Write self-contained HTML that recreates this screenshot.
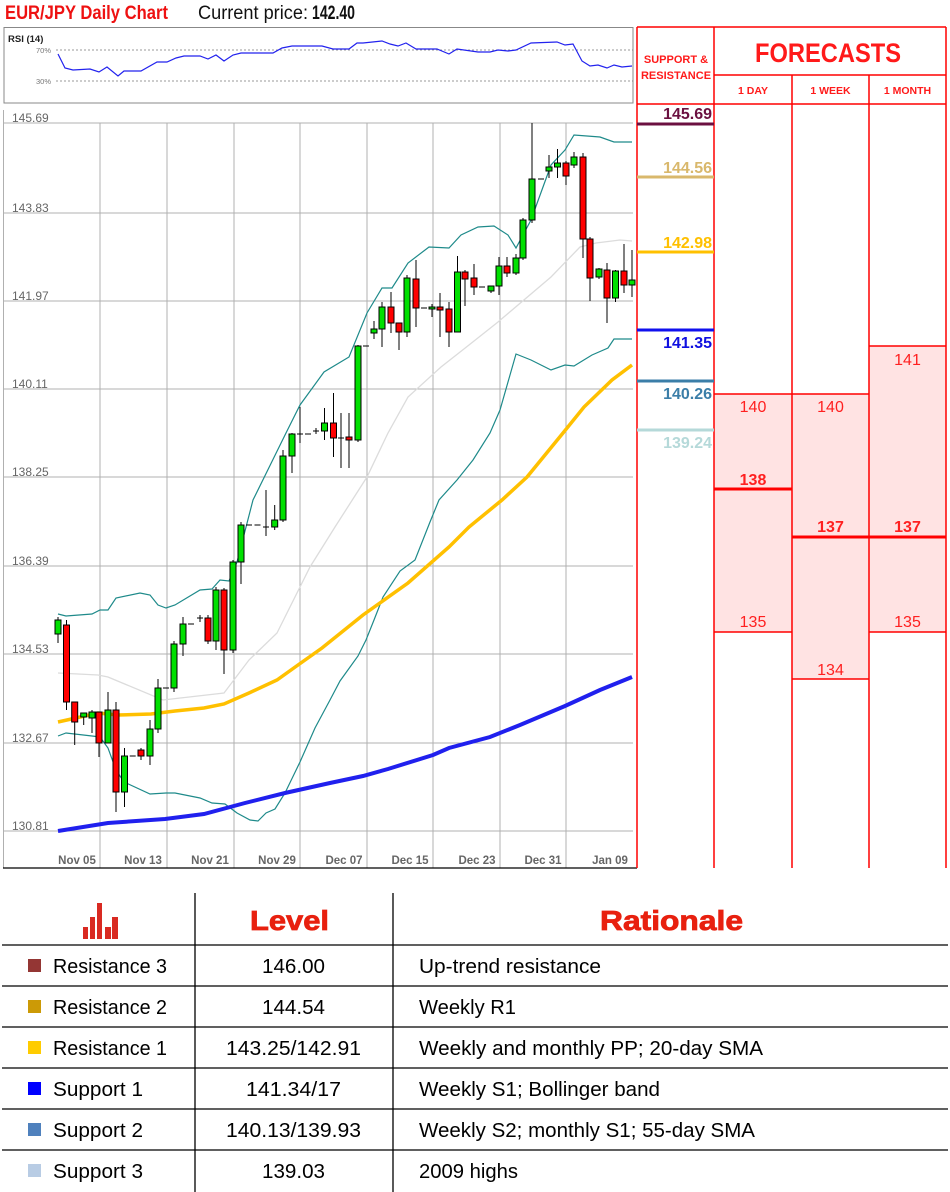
<!DOCTYPE html>
<html><head><meta charset="utf-8"><style>
html,body{margin:0;padding:0;background:#fff;}
svg{display:block;font-family:"Liberation Sans",sans-serif;}
</style></head><body>
<svg width="950" height="1192" viewBox="0 0 950 1192" xmlns="http://www.w3.org/2000/svg">
<rect width="950" height="1192" fill="#fff"/>
<!-- title -->
<text x="5" y="19" font-size="19" font-weight="bold" fill="#ee1111" textLength="163" lengthAdjust="spacingAndGlyphs">EUR/JPY Daily Chart</text>
<text x="198" y="19" font-size="19" fill="#111" textLength="110" lengthAdjust="spacingAndGlyphs">Current price:</text>
<text x="312" y="19" font-size="19" font-weight="bold" fill="#111" textLength="43" lengthAdjust="spacingAndGlyphs">142.40</text>

<!-- RSI -->
<rect x="4" y="27.5" width="629" height="75.5" fill="#fff" stroke="#888" stroke-width="1"/>
<text x="8" y="42" font-size="9.5" fill="#222" font-weight="bold">RSI (14)</text>
<text x="36" y="53" font-size="7.5" fill="#777">70%</text>
<text x="36" y="84" font-size="7.5" fill="#777">30%</text>
<line x1="56" y1="50" x2="633" y2="50" stroke="#777" stroke-dasharray="2,2" stroke-width="0.8"/>
<line x1="56" y1="81" x2="633" y2="81" stroke="#777" stroke-dasharray="2,2" stroke-width="0.8"/>
<polyline fill="none" stroke="#2222ee" stroke-width="1.2" points="58,54 65,68 73,70 90,69 99,72 107,67 118,76 124,71 141,71 157,62 167,62 176,58 184,56 200,56 208,59 216,55 224,61 233,55 241,53 273,53 282,48 292,46 322,46 333,49 349,49 357,43 363,43 382,41 390,44 398,46 406,43 416,49 437,49 449,54 457,49 478,52 490,52 498,50 508,51 516,50 531,43 557,42 565,45 573,44 582,61 590,66 598,65 607,68 614,65 622,67 632,66"/>

<!-- chart grid -->
<g stroke="#b0b0b0" stroke-width="1">
<line x1="3.5" y1="110" x2="3.5" y2="868"/>
<line x1="100" y1="123" x2="100" y2="868"/><line x1="167" y1="123" x2="167" y2="868"/>
<line x1="234" y1="123" x2="234" y2="868"/><line x1="300" y1="123" x2="300" y2="868"/>
<line x1="367" y1="123" x2="367" y2="868"/><line x1="433" y1="123" x2="433" y2="868"/>
<line x1="500" y1="123" x2="500" y2="868"/><line x1="566" y1="123" x2="566" y2="868"/>
<line x1="3" y1="123" x2="633" y2="123"/><line x1="3" y1="213" x2="633" y2="213"/>
<line x1="3" y1="301" x2="633" y2="301"/><line x1="3" y1="389" x2="633" y2="389"/>
<line x1="3" y1="477" x2="633" y2="477"/><line x1="3" y1="566" x2="633" y2="566"/>
<line x1="3" y1="654" x2="633" y2="654"/><line x1="3" y1="743" x2="633" y2="743"/>
<line x1="3" y1="831" x2="633" y2="831"/>
</g>
<line x1="3" y1="868" x2="637" y2="868" stroke="#000" stroke-width="1.2"/>
<g font-size="12" fill="#666">
<text x="12" y="122">145.69</text><text x="12" y="212">143.83</text><text x="12" y="300">141.97</text>
<text x="12" y="388">140.11</text><text x="12" y="476">138.25</text><text x="12" y="565">136.39</text>
<text x="12" y="653">134.53</text><text x="12" y="742">132.67</text><text x="12" y="830">130.81</text>
</g>
<g font-size="11.5" fill="#666" font-weight="bold" text-anchor="middle">
<text x="77" y="864">Nov 05</text><text x="143" y="864">Nov 13</text><text x="210" y="864">Nov 21</text>
<text x="277" y="864">Nov 29</text><text x="344" y="864">Dec 07</text><text x="410" y="864">Dec 15</text>
<text x="477" y="864">Dec 23</text><text x="543" y="864">Dec 31</text><text x="610" y="864">Jan 09</text>
</g>

<!-- indicator lines -->
<polyline fill="none" stroke="#dcdcdc" stroke-width="1.3" points="58,673 98,675 108,677 163,700 224,693 249,660 277,633 310,567 335,527 367,477 388,433 408,397 441,367 469,345 498,322 551,277 580,247 596,243 620,240 632,241"/>
<polyline fill="none" stroke="#1e8a8a" stroke-width="1.2" points="58,614 66,616 92,614 100,610 108,610 116,598 140,593 150,595 158,605 166,608 175,605 200,590 212,589 220,580 229,581 237,562 253,500 286,433 300,405 324,372 349,357 367,313 382,288 392,288 408,263 429,247 449,248 461,235 478,227 494,226 508,235 516,248 531,220 551,165 565,150 574,135 600,137 614,142 632,142"/>
<polyline fill="none" stroke="#1e8a8a" stroke-width="1.2" points="58,736 66,733 92,736 100,737 108,748 116,770 124,782 150,794 166,793 175,793 200,798 212,803 225,804 237,813 250,820 258,821 266,813 275,809 285,793 300,762 315,728 330,700 340,681 358,656 366,640 374,620 383,597 400,571 415,560 430,522 439,500 457,480 473,460 490,433 500,410 516,354 531,360 551,370 565,365 574,366 592,355 608,348 614,339 632,339"/>
<polyline fill="none" stroke="#ffc000" stroke-width="3.5" points="58,722 98,713 118,715 151,714 175,711 204,708 224,704 249,693 277,680 298,665 322,648 363,615 408,583 449,547 469,527 502,500 527,477 563,433 584,407 612,380 632,365"/>
<polyline fill="none" stroke="#2020ee" stroke-width="4" points="58,831 108,823 165,819 204,814 245,803 285,793 330,783 363,776 388,769 433,755 449,748 490,737 520,725 565,706 600,690 632,677"/>

<!-- candles -->
<g stroke="#000" stroke-width="1">
<line x1="58" y1="617" x2="58" y2="643"/><rect x="55" y="620" width="6" height="14" fill="#00e000"/>
<line x1="66.5" y1="620" x2="66.5" y2="710"/><rect x="63.5" y="625" width="6" height="77" fill="#f00"/>
<line x1="74.7" y1="702" x2="74.7" y2="745"/><rect x="71.7" y="702" width="6" height="20" fill="#f00"/>
<line x1="83.7" y1="713" x2="83.7" y2="725"/><rect x="80.7" y="713" width="6" height="4" fill="#00e000"/>
<line x1="92" y1="710" x2="92" y2="733"/><rect x="89" y="712" width="6" height="6" fill="#00e000"/>
<line x1="99" y1="712" x2="99" y2="757"/><rect x="96" y="712" width="6" height="31" fill="#f00"/>
<line x1="108" y1="692" x2="108" y2="743"/><rect x="105" y="710" width="6" height="33" fill="#00e000"/>
<line x1="116" y1="702" x2="116" y2="812"/><rect x="113" y="710" width="6" height="82" fill="#f00"/>
<line x1="124.5" y1="748" x2="124.5" y2="807"/><rect x="121.5" y="756" width="6" height="36" fill="#00e000"/>
<line x1="129.7" y1="756" x2="135.7" y2="756"/>
<line x1="141" y1="748" x2="141" y2="760"/><rect x="138" y="750" width="6" height="6" fill="#f00"/>
<line x1="150" y1="720" x2="150" y2="765"/><rect x="147" y="729" width="6" height="27" fill="#00e000"/>
<line x1="158" y1="679" x2="158" y2="733"/><rect x="155" y="688" width="6" height="41" fill="#00e000"/>
<line x1="163" y1="688" x2="169" y2="688"/>
<line x1="174" y1="641" x2="174" y2="692"/><rect x="171" y="644" width="6" height="44" fill="#00e000"/>
<line x1="183" y1="617" x2="183" y2="656"/><rect x="180" y="624" width="6" height="20" fill="#00e000"/>
<line x1="188" y1="624" x2="194" y2="624"/>
<line x1="197" y1="618" x2="203" y2="618"/><line x1="200" y1="615" x2="200" y2="622"/>
<line x1="208" y1="615" x2="208" y2="644"/><rect x="205" y="618" width="6" height="23" fill="#f00"/>
<line x1="216" y1="587" x2="216" y2="650"/><rect x="213" y="590" width="6" height="51" fill="#00e000"/>
<line x1="224" y1="588" x2="224" y2="674"/><rect x="221" y="590" width="6" height="60" fill="#f00"/>
<line x1="233" y1="560" x2="233" y2="653"/><rect x="230" y="562" width="6" height="88" fill="#00e000"/>
<line x1="241" y1="522" x2="241" y2="584"/><rect x="238" y="525" width="6" height="37" fill="#00e000"/>
<line x1="246" y1="525" x2="252" y2="525"/><line x1="254.5" y1="525" x2="260.5" y2="525"/>
<line x1="263" y1="527" x2="269" y2="527"/><line x1="266" y1="490" x2="266" y2="536"/>
<line x1="274.7" y1="505" x2="274.7" y2="530"/><rect x="271.7" y="520" width="6" height="7" fill="#00e000"/>
<line x1="283" y1="450" x2="283" y2="522"/><rect x="280" y="456" width="6" height="64" fill="#00e000"/>
<line x1="292" y1="433" x2="292" y2="473"/><rect x="289" y="434" width="6" height="22" fill="#00e000"/>
<line x1="297" y1="434" x2="303" y2="434"/><line x1="300" y1="407" x2="300" y2="443"/>
<line x1="305" y1="434" x2="311" y2="434"/>
<line x1="313" y1="431" x2="319" y2="431"/><line x1="316" y1="428" x2="316" y2="434"/>
<line x1="324.5" y1="408" x2="324.5" y2="440"/><rect x="321.5" y="423" width="6" height="8" fill="#00e000"/>
<line x1="333.5" y1="393" x2="333.5" y2="457"/><rect x="330.5" y="423" width="6" height="15" fill="#f00"/>
<line x1="338" y1="438" x2="344" y2="438"/><line x1="341" y1="413" x2="341" y2="468"/>
<line x1="349" y1="413" x2="349" y2="468"/><rect x="346" y="437" width="6" height="3" fill="#f00"/>
<line x1="358" y1="345" x2="358" y2="442"/><rect x="355" y="346" width="6" height="94" fill="#00e000"/>
<line x1="363" y1="346" x2="369" y2="346"/>
<line x1="374" y1="321" x2="374" y2="339"/><rect x="371" y="329" width="6" height="4" fill="#00e000"/>
<line x1="382" y1="302" x2="382" y2="347"/><rect x="379" y="307" width="6" height="22" fill="#00e000"/>
<line x1="391" y1="292" x2="391" y2="333"/><rect x="388" y="307" width="6" height="16" fill="#f00"/>
<line x1="399" y1="323" x2="399" y2="350"/><rect x="396" y="323" width="6" height="9" fill="#f00"/>
<line x1="407" y1="275" x2="407" y2="337"/><rect x="404" y="278" width="6" height="54" fill="#00e000"/>
<line x1="416" y1="260" x2="416" y2="327"/><rect x="413" y="279" width="6" height="29" fill="#f00"/>
<line x1="421" y1="308" x2="427" y2="308"/>
<line x1="432" y1="304" x2="432" y2="317"/><rect x="429" y="307" width="6" height="2" fill="#00e000"/>
<line x1="440" y1="293" x2="440" y2="337"/><rect x="437" y="307" width="6" height="3" fill="#f00"/>
<line x1="449" y1="302" x2="449" y2="347"/><rect x="446" y="309" width="6" height="23" fill="#f00"/>
<line x1="457.5" y1="256" x2="457.5" y2="332"/><rect x="454.5" y="272" width="6" height="60" fill="#00e000"/>
<line x1="465" y1="270" x2="465" y2="306"/><rect x="462" y="272" width="6" height="7" fill="#f00"/>
<line x1="474" y1="264" x2="474" y2="295"/><rect x="471" y="278" width="6" height="9" fill="#f00"/>
<line x1="479" y1="287" x2="485" y2="287"/>
<line x1="491" y1="286" x2="491" y2="293"/><rect x="488" y="286" width="6" height="5" fill="#00e000"/>
<line x1="499" y1="257" x2="499" y2="295"/><rect x="496" y="266" width="6" height="20" fill="#00e000"/>
<line x1="507" y1="257" x2="507" y2="277"/><rect x="504" y="266" width="6" height="7" fill="#f00"/>
<line x1="516" y1="254" x2="516" y2="275"/><rect x="513" y="258" width="6" height="15" fill="#00e000"/>
<line x1="523" y1="218" x2="523" y2="260"/><rect x="520" y="220" width="6" height="38" fill="#00e000"/>
<line x1="532" y1="123" x2="532" y2="223"/><rect x="529" y="179" width="6" height="41" fill="#00e000"/>
<line x1="538" y1="179" x2="544" y2="179"/>
<line x1="549" y1="155" x2="549" y2="178"/><rect x="546" y="167" width="6" height="4" fill="#00e000"/>
<line x1="557.5" y1="149" x2="557.5" y2="178"/><rect x="554.5" y="163" width="6" height="4" fill="#00e000"/>
<line x1="566" y1="161" x2="566" y2="185"/><rect x="563" y="163" width="6" height="13" fill="#f00"/>
<line x1="574" y1="152" x2="574" y2="168"/><rect x="571" y="157" width="6" height="8" fill="#00e000"/>
<line x1="583" y1="153" x2="583" y2="258"/><rect x="580" y="157" width="6" height="82" fill="#f00"/>
<line x1="590" y1="237" x2="590" y2="301"/><rect x="587" y="239" width="6" height="39" fill="#f00"/>
<line x1="599" y1="268" x2="599" y2="279"/><rect x="596" y="269" width="6" height="8" fill="#00e000"/>
<line x1="607" y1="263" x2="607" y2="323"/><rect x="604" y="270" width="6" height="28" fill="#f00"/>
<line x1="615.5" y1="270" x2="615.5" y2="302"/><rect x="612.5" y="271" width="6" height="27" fill="#00e000"/>
<line x1="624" y1="244" x2="624" y2="293"/><rect x="621" y="271" width="6" height="14" fill="#f00"/>
<line x1="632" y1="250" x2="632" y2="297"/><rect x="629" y="280" width="6" height="5" fill="#00e000"/>
</g>

<!-- right panel -->
<rect x="714" y="394" width="78" height="238" fill="#ffe3e3"/>
<rect x="792" y="394" width="77" height="285" fill="#ffe3e3"/>
<rect x="869" y="346" width="77" height="286" fill="#ffe3e3"/>
<g stroke="#ff0000" stroke-width="1.5" fill="none">
<line x1="637" y1="27" x2="946" y2="27"/>
<line x1="637" y1="27" x2="637" y2="868"/>
<line x1="714" y1="27" x2="714" y2="868"/>
<line x1="792" y1="75" x2="792" y2="868"/>
<line x1="869" y1="75" x2="869" y2="868"/>
<line x1="946" y1="27" x2="946" y2="868"/>
<line x1="714" y1="75" x2="946" y2="75"/>
<line x1="637" y1="104" x2="946" y2="104"/>
<line x1="714" y1="394" x2="869" y2="394"/>
<line x1="869" y1="346" x2="946" y2="346"/>
<line x1="714" y1="632" x2="792" y2="632"/>
<line x1="869" y1="632" x2="946" y2="632"/>
<line x1="792" y1="679" x2="869" y2="679"/>
</g>
<line x1="714" y1="489" x2="792" y2="489" stroke="#f00" stroke-width="3"/>
<line x1="792" y1="537" x2="946" y2="537" stroke="#f00" stroke-width="3"/>
<g fill="#ff1a1a" font-weight="bold" text-anchor="middle">
<text x="676" y="63" font-size="11">SUPPORT &amp;</text>
<text x="676" y="79" font-size="11">RESISTANCE</text>
<text x="828" y="62" font-size="27" textLength="146" lengthAdjust="spacingAndGlyphs">FORECASTS</text>
<text x="753" y="94" font-size="10.5">1 DAY</text>
<text x="830.5" y="94" font-size="10.5">1 WEEK</text>
<text x="907.5" y="94" font-size="10.5">1 MONTH</text>
</g>
<g font-size="16" text-anchor="middle" fill="#ff2020">
<text x="753" y="412">140</text><text x="830.5" y="412">140</text><text x="907.5" y="365">141</text>
<text x="753" y="485" font-weight="bold">138</text><text x="830.5" y="532" font-weight="bold">137</text><text x="907.5" y="532" font-weight="bold">137</text>
<text x="753" y="627">135</text><text x="907.5" y="627">135</text><text x="830.5" y="675">134</text>
</g>
<line x1="637" y1="124" x2="714" y2="124" stroke="#6b1040" stroke-width="3"/>
<line x1="637" y1="177" x2="714" y2="177" stroke="#d9b86c" stroke-width="3"/>
<line x1="637" y1="252" x2="714" y2="252" stroke="#ffc000" stroke-width="3"/>
<line x1="637" y1="330" x2="714" y2="330" stroke="#1010ee" stroke-width="3"/>
<line x1="637" y1="381" x2="714" y2="381" stroke="#3b7ea8" stroke-width="3"/>
<line x1="637" y1="430" x2="714" y2="430" stroke="#b5d9d9" stroke-width="3"/>
<g font-size="16" font-weight="bold" text-anchor="end">
<text x="712" y="119" fill="#6b1040">145.69</text>
<text x="712" y="173" fill="#d9b86c">144.56</text>
<text x="712" y="248" fill="#ffc000">142.98</text>
<text x="712" y="348" fill="#1010e0">141.35</text>
<text x="712" y="399" fill="#3b7ea8">140.26</text>
<text x="712" y="448" fill="#b5d9d9">139.24</text>
</g>

<!-- table -->
<g fill="#d92a22">
<rect x="83" y="927" width="5" height="12"/><rect x="90" y="917" width="5" height="22"/>
<rect x="97" y="903" width="5" height="36"/><rect x="105" y="927" width="6" height="12"/>
<rect x="112" y="917" width="6" height="22"/>
</g>
<g fill="#e8200f" font-weight="bold" font-size="28" stroke="#e8200f" stroke-width="0.8">
<text x="250" y="930" textLength="79" lengthAdjust="spacingAndGlyphs">Level</text>
<text x="600" y="930" textLength="143" lengthAdjust="spacingAndGlyphs">Rationale</text>
</g>
<g stroke="#000" stroke-width="1.3">
<line x1="195" y1="893" x2="195" y2="1192"/><line x1="393" y1="893" x2="393" y2="1192"/>
<line x1="2" y1="945" x2="948" y2="945"/><line x1="2" y1="986" x2="948" y2="986"/>
<line x1="2" y1="1027" x2="948" y2="1027"/><line x1="2" y1="1068" x2="948" y2="1068"/>
<line x1="2" y1="1109" x2="948" y2="1109"/><line x1="2" y1="1150" x2="948" y2="1150"/>
</g>
<rect x="28" y="959" width="13" height="13" fill="#943634"/>
<rect x="28" y="1000" width="13" height="13" fill="#cc9a06"/>
<rect x="28" y="1041" width="13" height="13" fill="#ffcc00"/>
<rect x="28" y="1082" width="13" height="13" fill="#0000ff"/>
<rect x="28" y="1123" width="13" height="13" fill="#4f81bd"/>
<rect x="28" y="1164" width="13" height="13" fill="#b8cce4"/>
<g font-size="20" fill="#000">
<text x="53" y="973" textLength="114" lengthAdjust="spacingAndGlyphs">Resistance 3</text>
<text x="53" y="1014" textLength="114" lengthAdjust="spacingAndGlyphs">Resistance 2</text>
<text x="53" y="1055" textLength="114" lengthAdjust="spacingAndGlyphs">Resistance 1</text>
<text x="53" y="1096" textLength="90" lengthAdjust="spacingAndGlyphs">Support 1</text>
<text x="53" y="1137" textLength="90" lengthAdjust="spacingAndGlyphs">Support 2</text>
<text x="53" y="1178" textLength="90" lengthAdjust="spacingAndGlyphs">Support 3</text>
<text x="262" y="973" textLength="63" lengthAdjust="spacingAndGlyphs">146.00</text>
<text x="262" y="1014" textLength="63" lengthAdjust="spacingAndGlyphs">144.54</text>
<text x="226" y="1055" textLength="135" lengthAdjust="spacingAndGlyphs">143.25/142.91</text>
<text x="246" y="1096" textLength="95" lengthAdjust="spacingAndGlyphs">141.34/17</text>
<text x="226" y="1137" textLength="135" lengthAdjust="spacingAndGlyphs">140.13/139.93</text>
<text x="262" y="1178" textLength="63" lengthAdjust="spacingAndGlyphs">139.03</text>
<text x="419" y="973" textLength="182" lengthAdjust="spacingAndGlyphs">Up-trend resistance</text>
<text x="419" y="1014" textLength="97" lengthAdjust="spacingAndGlyphs">Weekly R1</text>
<text x="419" y="1055" textLength="344" lengthAdjust="spacingAndGlyphs">Weekly and monthly PP; 20-day SMA</text>
<text x="419" y="1096" textLength="241" lengthAdjust="spacingAndGlyphs">Weekly S1; Bollinger band</text>
<text x="419" y="1137" textLength="336" lengthAdjust="spacingAndGlyphs">Weekly S2; monthly S1; 55-day SMA</text>
<text x="419" y="1178" textLength="99" lengthAdjust="spacingAndGlyphs">2009 highs</text>
</g>
</svg>
</body></html>
